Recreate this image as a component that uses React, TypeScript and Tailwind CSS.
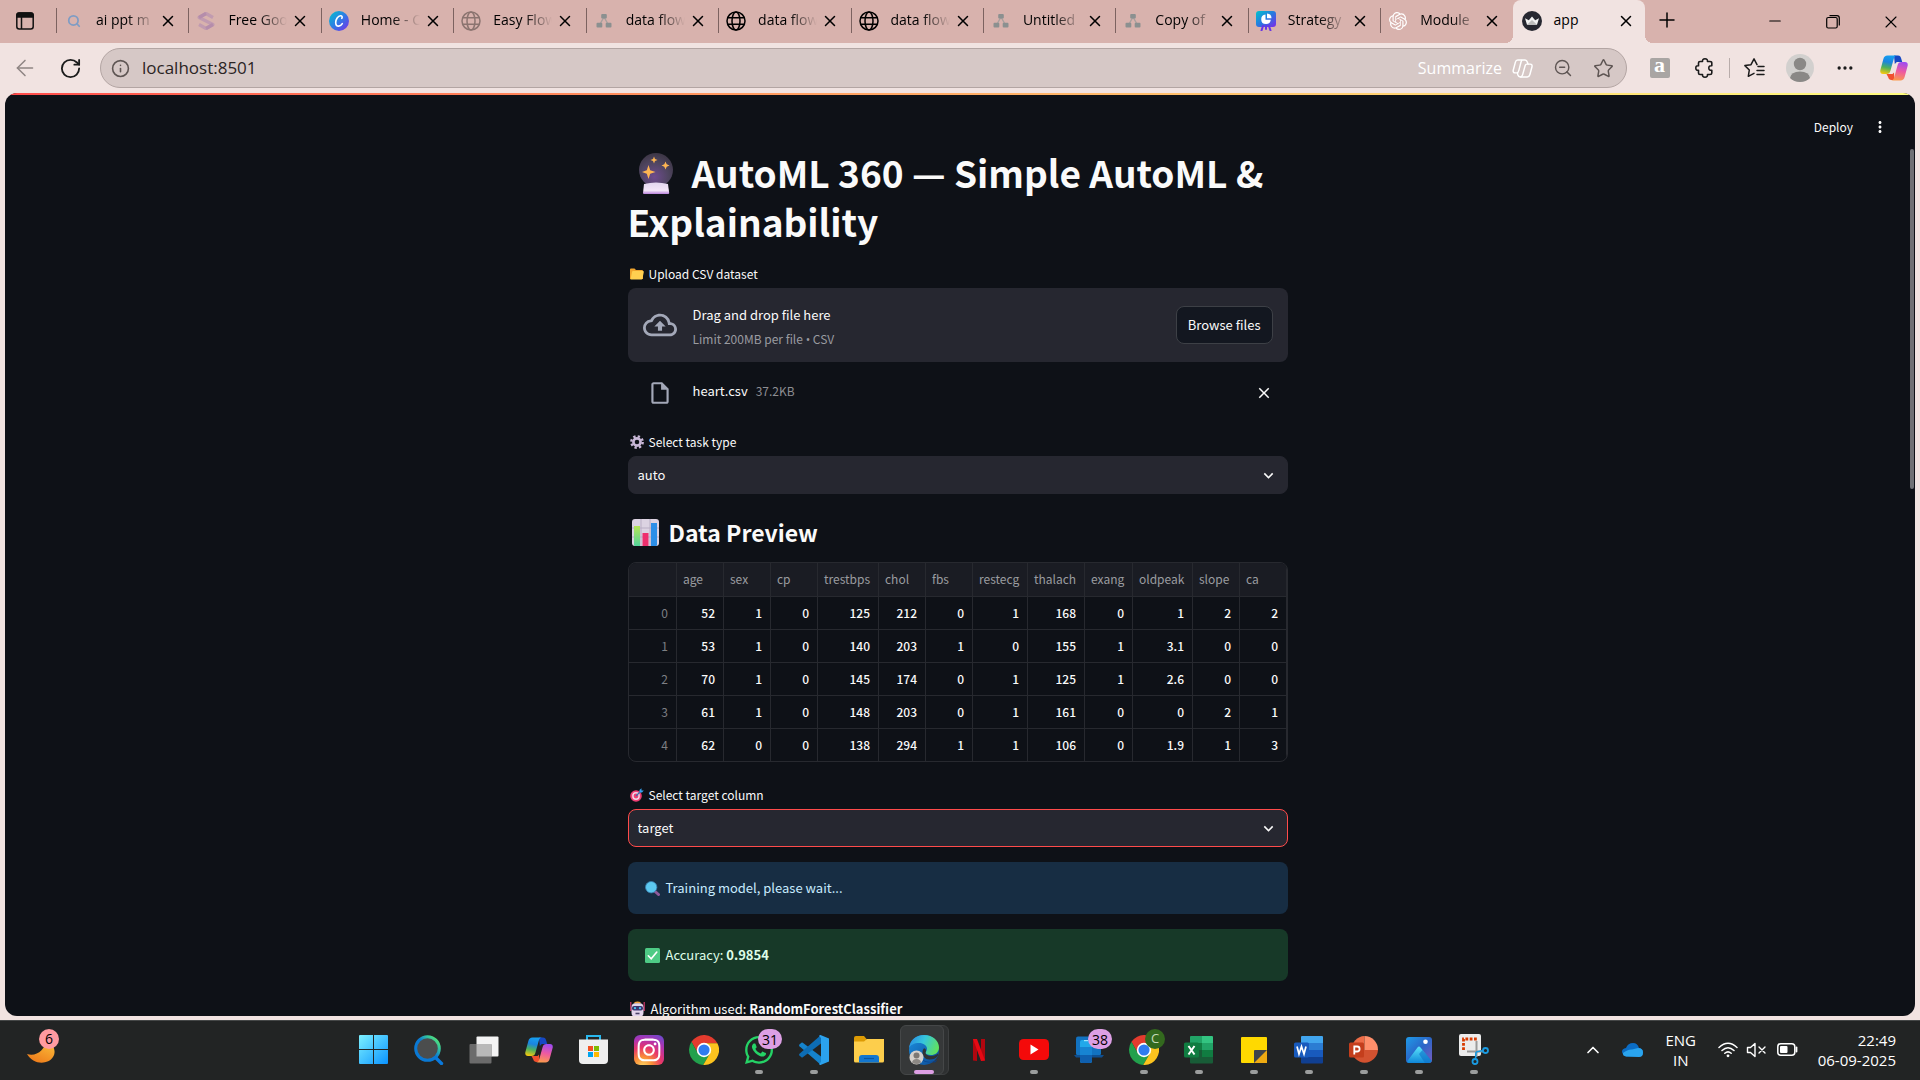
import React, { useId } from "react";
import {
  ArrowLeft,
  ChevronUp,
  Ellipsis,
  Info,
  Minus,
  Plus,
  RotateCw,
  Search,
  Star,
  X,
  ZoomOut,
} from "lucide-react";
import { SiOpenai } from "react-icons/si";
import { FaInstagram, FaWhatsapp } from "react-icons/fa";
import {
  MdClose,
  MdKeyboardArrowDown,
  MdMoreVert,
  MdOutlineCloudUpload,
  MdOutlineInsertDriveFile,
} from "react-icons/md";

type IconProps = { className?: string };

/* ---------- Tab icons ---------- */

const Globe = ({ className }: IconProps) => (
  <svg viewBox="0 0 20 20" className={className} fill="none" stroke="currentColor" strokeWidth="1.5">
    <circle cx="10" cy="10" r="9" />
    <ellipse cx="10" cy="10" rx="4" ry="9" />
    <path d="M1.8 6.8h16.4M1.8 13.2h16.4" />
  </svg>
);

const Diagram = () => (
  <svg viewBox="0 0 16 16" className="size-4">
    <path d="M8 4 3.5 12M8 4l4.500 8" stroke="#a8a09e" strokeWidth="1.400" />
    <rect x="5.200" y="1" width="5.600" height="4.500" rx="1" fill="#8b9090" />
    <rect x="0.500" y="9.800" width="5.800" height="4.800" rx="1" fill="#8b9090" />
    <rect x="9.700" y="9.800" width="5.800" height="4.800" rx="1" fill="#8b9090" />
  </svg>
);

const SLogo = () => (
  <svg viewBox="0 0 20 20" className="size-5" fill="none" stroke="#c19bb0" strokeWidth="3.200" strokeLinejoin="round">
    <path d="M17 6.500 10 2.500 3 6.500 17 13.500 10 17.500 3 13.500" />
    <path d="M10 2.500 3 6.500M17 13.500 10 17.500" stroke="#b58dab" />
  </svg>
);

const CanvaLogo = () => (
  <svg viewBox="0 0 20 20" className="size-5">
    <defs>
      <linearGradient id="canva" x1="0" y1="0" x2="1" y2="1">
        <stop offset="0" stopColor="#00c4cc" />
        <stop offset="0.5" stopColor="#2f7be6" />
        <stop offset="1" stopColor="#7d2ae8" />
      </linearGradient>
    </defs>
    <circle cx="10" cy="10" r="10" fill="url(#canva)" />
    <path d="M12.800 7.300c.8-1.300.3-2.700-1.300-2.600-2.500.2-4.800 3.500-4.800 6.700 0 2.300 1.200 3.700 3 3.700 1.500 0 2.800-1 3.600-2.400" fill="none" stroke="#fff" strokeWidth="1.600" strokeLinecap="round" />
  </svg>
);

const StrategyLogo = () => (
  <svg viewBox="0 0 20 20" className="size-5">
    <defs>
      <linearGradient id="strat" x1="0" y1="0" x2="1" y2="1">
        <stop offset="0" stopColor="#00c4cc" />
        <stop offset="0.5" stopColor="#2878e0" />
        <stop offset="1" stopColor="#7d2ae8" />
      </linearGradient>
    </defs>
    <rect width="20" height="16" rx="3" fill="url(#strat)" />
    <path d="M7 15 5.500 19.500M13 15l1.500 4.500M10 15v3" stroke="#6a35e6" strokeWidth="2" strokeLinecap="round" />
    <path d="M9.500 3.500a4.800 4.800 0 1 0 5.300 5.300H9.500z" fill="#fff" />
    <path d="M11 2.500v4.800h4.500A4.800 4.800 0 0 0 11 2.500z" fill="#fff" />
  </svg>
);

const CrownLogo = () => (
  <svg viewBox="0 0 20 20" className="size-5">
    <circle cx="10" cy="10" r="10" fill="#262730" />
    <path d="M3 7.200l3.800 2L10 5.600l3.200 3.600 3.800-2-2 6.600H5z" fill="#f2f2f2" />
    <path d="M5 13.800 10 9l5 4.800z" fill="#bdbdbd" />
  </svg>
);

/* ---------- Shared brand drawings ---------- */

const Copilot = ({ className }: IconProps) => {
  const id = useId();
  return (
    <svg viewBox="0 0 28 26" className={className}>
      <defs>
        <linearGradient id={id + "a"} x1="0.500" y1="0" x2="0.300" y2="1">
          <stop offset="0" stopColor="#16a0f0" />
          <stop offset="0.350" stopColor="#1b84e0" />
          <stop offset="0.650" stopColor="#4cb05e" />
          <stop offset="1" stopColor="#f4c80e" />
        </linearGradient>
        <linearGradient id={id + "b"} x1="0.600" y1="0" x2="0.400" y2="1">
          <stop offset="0" stopColor="#a04bf0" />
          <stop offset="0.500" stopColor="#ee5aa0" />
          <stop offset="1" stopColor="#fb9a4c" />
        </linearGradient>
      </defs>
      <path d="M14 0.500h4c2 0 2.600 1 3.200 3l1 3.500h-5.400l-2 2z" fill="#1648c4" />
      <path d="M6.500 19h6l1.500-1.500.5 7.500h-3c-2 0-2.700-.8-3.300-2.700z" fill="#f0502e" />
      <path d="M7.500.500H17c-2 0-2.700 1.300-3.300 3.500l-3.200 11.500c-.7 2.600-1.800 3.500-4 3.500H3C.7 19-.2 17.300.4 15L3.300 4.200C4 1.700 5.200.500 7.500.500z" fill={"url(#" + id + "a)"} />
      <path d="M20.500 25.500H11c2 0 2.700-1.300 3.300-3.500l3.200-11.500C18.200 7.900 19.300 7 21.500 7H25c2.300 0 3.200 1.700 2.600 4l-2.900 10.800c-.7 2.500-1.900 3.700-4.200 3.700z" fill={"url(#" + id + "b)"} />
    </svg>
  );
};

const Chrome = () => (
  <svg viewBox="2 2 44 44" className="size-[30px]">
    <path d="M5.550 12.020A22 22 0 0 1 43.600 14H24v10l-8.660 5z" fill="#e33b2e" />
    <path d="M5.550 12.020 15.340 29 24 24l8.660 5-9.810 16.970A22 22 0 0 1 5.550 12.020z" fill="#22a04c" />
    <path d="M43.600 14A22 22 0 0 1 22.850 45.970L32.660 29 24 24V14z" fill="#fcc31e" />
    <circle cx="24" cy="24" r="10.500" fill="#fff" />
    <circle cx="24" cy="24" r="8.200" fill="#2f7bf0" />
  </svg>
);

/* ---------- Taskbar icons ---------- */

const Windows = () => (
  <svg viewBox="0 0 29 29" className="size-[29px]">
    <defs>
      <linearGradient id="win" x1="0" y1="0" x2="29" y2="29" gradientUnits="userSpaceOnUse">
        <stop offset="0" stopColor="#7df1ff" />
        <stop offset="1" stopColor="#0a93ff" />
      </linearGradient>
    </defs>
    <path d="M0 1q0-1 1-1h13v14H0zM15 0h13q1 0 1 1v13H15zM0 15h14v14H1q-1 0-1-1zM15 15h14v13q0 1-1 1H15z" fill="url(#win)" />
  </svg>
);

const SearchOrb = () => (
  <svg viewBox="0 0 30 30" className="size-[30px]" fill="none">
    <defs>
      <linearGradient id="orb" x1="1" y1="0" x2="0.200" y2="0.800">
        <stop offset="0" stopColor="#66ee66" />
        <stop offset="0.300" stopColor="#35c79b" />
        <stop offset="0.600" stopColor="#0a79d4" />
      </linearGradient>
    </defs>
    <path d="m21 22 6.500 6.500" stroke="#0a79dc" strokeWidth="3.400" strokeLinecap="round" />
    <circle cx="13.500" cy="13.500" r="11.800" fill="#4b4d4d" stroke="url(#orb)" strokeWidth="3" />
  </svg>
);

const TaskView = () => (
  <svg viewBox="0 0 30 28" className="h-7 w-[30px]">
    <rect x="7.500" y="0.500" width="22" height="20" rx="1" fill="#f4f4f4" />
    <rect x="0.500" y="8" width="22" height="19.500" rx="1" fill="#6b6b6b" />
    <path d="M7.500 8h15v12.500h-15z" fill="#b9b9b9" />
  </svg>
);

const Store = () => (
  <svg viewBox="0 0 29 29" className="size-[29px]">
    <path d="M8 6V1h13v5" fill="none" stroke="#29b8ee" strokeWidth="2" />
    <path d="M0 4.500h29V25q0 4-4 4H4q-4 0-4-4z" fill="#efefef" />
    <path d="M9 11h5v5H9z" fill="#f25022" />
    <path d="M15 11h5v5h-5z" fill="#7fba00" />
    <path d="M9 17h5v5H9z" fill="#00a4ef" />
    <path d="M15 17h5v5h-5z" fill="#ffb900" />
  </svg>
);

const Instagram = () => (
  <span className="flex size-[30px] items-center justify-center rounded-md bg-[radial-gradient(circle_at_30%_105%,#fdd866_0%,#fa8f38_25%,#e8366a_50%,#b132b0_72%,#5a50d4_100%)]">
    <FaInstagram className="size-[26px] text-white" />
  </span>
);

const VsCode = () => (
  <svg viewBox="0 0 30 30" className="size-[30px]">
    <path d="M0.400 9.500 2.400 7.800q.7-.5 1.400 0L22 21.500V30L0.500 11.200q-.8-.9-.1-1.700z" fill="#1583cc" />
    <path d="M0.400 20.500 2.400 22.200q.7.500 1.400 0L22 8.500V0L0.500 18.800q-.8.900-.1 1.700z" fill="#0d6db5" />
    <path d="M21.500 0 30 3.500v23L21.500 30q-1 0-1.500-1l2-2V3l-2-2q.5-1 1.500-1z" fill="#2ba2ee" />
  </svg>
);

const Explorer = () => (
  <svg viewBox="0 0 30 27" className="h-[27px] w-[30px]">
    <path d="M0 2q0-2 2-2h8l3 3.500V9H0z" fill="#dd9b04" />
    <path d="M0 5.500h10l3-2.500h17v22q0 1.500-1.500 1.500h-27Q0 26.500 0 25z" fill="#fdce4c" />
    <path d="M5 26.500V22q0-3 3-3h14q3 0 3 3v4.500z" fill="#1377d0" />
    <path d="M10 22.500h10" stroke="#0b56a0" strokeWidth="1.200" />
  </svg>
);

const Edge = () => (
  <svg viewBox="0 0 30 30" className="size-[30px]">
    <defs>
      <linearGradient id="edge-top" x1="0" y1="0.300" x2="1" y2="0.600">
        <stop offset="0" stopColor="#2a8fe4" />
        <stop offset="0.450" stopColor="#36c6dc" />
        <stop offset="1" stopColor="#62e35a" />
      </linearGradient>
      <linearGradient id="edge-low" x1="0" y1="0" x2="1" y2="1">
        <stop offset="0" stopColor="#1c8fe0" />
        <stop offset="1" stopColor="#0c4a95" />
      </linearGradient>
    </defs>
    <circle cx="15" cy="15" r="15" fill="url(#edge-low)" />
    <path d="M0 13C1 5 7 0 15 0c9 0 15 6 15 12.500 0 5-4 7.500-8 7.500-3.500 0-5.500-1-5.500-2.200 0-.9 1.500-1.700 1.500-4C18 10.500 14.500 8 10 8 5 8 1.500 10 0 13z" fill="url(#edge-top)" />
    <path d="M11 18c0 6 5 9 10 9 3 0 5-1 6.500-2 1 0-.5 1.500-1.500 2.500-3-1-8 1-12-2s-4-6-3-7.500z" fill="#0b3e86" />
    <path d="M29 20.500c-2 3-5 4-8.500 4-4.500 0-7-3.500-7-7 0-2 .8-3.500 1.500-4.200 2 .2 2.500 2.500 1.500 4.500 0 2 3 3.200 5.700 3.200 3 0 5.500-1 6.800-2.500z" fill="#303334" />
    <circle cx="7.500" cy="22.500" r="7" fill="#d4d0cc" />
    <circle cx="7.500" cy="20.500" r="3" fill="#7c7874" />
    <path d="M3 27.500q.5-3.500 4.500-3.500t4.500 3.500q-4 3-9 0z" fill="#8c8884" />
  </svg>
);

const Netflix = () => (
  <svg viewBox="0 0 12 22" className="h-[22px] w-3">
    <path d="M0 0h4v22l-4-.5zM8 0h4v21.500L8 22z" fill="#b1060f" />
    <path d="M0 0h4l8 21.500L8 22z" fill="#e50914" />
  </svg>
);

const YouTube = () => (
  <svg viewBox="0 0 30 21" className="h-[21px] w-[30px]">
    <rect width="30" height="21" rx="4.500" fill="#f40a0a" />
    <path d="m11.500 5.500 8 5-8 5z" fill="#fff" />
  </svg>
);

const PhoneLink = () => (
  <svg viewBox="0 0 30 27" className="h-[27px] w-[30px]">
    <rect x="2" y="0.500" width="25" height="19" rx="2" fill="#1272c0" />
    <path d="M0 19h30l-2 2.500H2z" fill="#0f4f90" />
    <rect x="6" y="4" width="12" height="23" rx="2" fill="#21a8ea" />
    <path d="M6 19h12v6q0 2-2 2H8q-2 0-2-2z" fill="#0f5fae" />
    <path d="M6 11h12v8H6z" fill="#1784d2" />
    <path d="M10 4.600h4" stroke="#9be7ff" strokeWidth="1.200" />
  </svg>
);

const Excel = () => (
  <svg viewBox="0 0 29 28" className="h-7 w-[29px]">
    <path d="M6 1q0-1 1-1h11v7H6z" fill="#21a366" />
    <path d="M18 0h10q1 0 1 1v6H18z" fill="#33c481" />
    <path d="M6 7h12v7H6z" fill="#107c41" />
    <path d="M18 7h11v7H18z" fill="#21a366" />
    <path d="M6 14h23v12.500q0 1-1 1H7q-1 0-1-1z" fill="#185c37" />
    <path d="M18 14h11v7H18z" fill="#107c41" />
    <rect y="6.500" width="15" height="15" rx="1.500" fill="#107c41" />
    <path d="m4.500 10 6 8.500M10.500 10l-6 8.500" stroke="#fff" strokeWidth="2" />
  </svg>
);

const Sticky = () => (
  <svg viewBox="0 0 26 26" className="size-[26px]">
    <rect width="26" height="26" rx="1" fill="#ffd900" />
    <path d="M13 26V14q0-1 1-1h12v13z" fill="#efab12" />
    <path d="M13 26V14q0-1 1-1h12z" fill="#40454a" />
  </svg>
);

const Word = () => (
  <svg viewBox="0 0 29 28" className="h-7 w-[29px]">
    <path d="M7 1q0-1 1-1h20q1 0 1 1v6H7z" fill="#41a5ee" />
    <path d="M7 7h22v7H7z" fill="#2b7cd3" />
    <path d="M7 14h22v7H7z" fill="#185abd" />
    <path d="M7 21h22v5.500q0 1-1 1H8q-1 0-1-1z" fill="#103f91" />
    <rect y="6.500" width="15" height="15" rx="1.500" fill="#185abd" />
    <path d="m3 10.500 2 7.500 2.500-7.500L10 18l2-7.500" fill="none" stroke="#fff" strokeWidth="1.700" />
  </svg>
);

const PowerPoint = () => (
  <svg viewBox="0 0 29 28" className="h-7 w-[29px]">
    <path d="M15.500 0v14h-13A13.500 14 0 0 1 15.500 0z" fill="#ed6c47" />
    <path d="M15.500 0A13.500 14 0 0 1 29 14H15.500z" fill="#ff8f6b" />
    <path d="M2.500 14H29a13.300 14 0 0 1-26.500 0z" fill="#d35230" />
    <rect y="6.500" width="15" height="15" rx="1.500" fill="#c43e1c" />
    <path d="M5.300 18.500v-8h2.800q2.500 0 2.500 2.500T8.100 15.500H5.300" fill="none" stroke="#fff" strokeWidth="1.800" />
  </svg>
);

const Photos = () => (
  <svg viewBox="0 0 26 26" className="size-[26px]">
    <defs>
      <linearGradient id="ph-bg" x1="0" y1="0" x2="1" y2="1">
        <stop offset="0" stopColor="#1f9be8" />
        <stop offset="0.500" stopColor="#2a66c8" />
        <stop offset="1" stopColor="#7b5bc0" />
      </linearGradient>
      <linearGradient id="ph-hill" x1="0" y1="0" x2="0" y2="1">
        <stop offset="0" stopColor="#5be4fa" />
        <stop offset="1" stopColor="#0f86d8" />
      </linearGradient>
    </defs>
    <rect width="26" height="26" rx="3" fill="url(#ph-bg)" />
    <path d="M1 24.500 11.500 10.500q1.500-2 3 0L25.500 24q-1 2-3 2H3q-1.500 0-2-1.500z" fill="url(#ph-hill)" />
    <path d="m13 17 3.500-4L26 24q-1 2-3.500 2H19z" fill="#0e72c8" opacity="0.600" />
    <circle cx="19.500" cy="4.800" r="2.300" fill="#fff" />
  </svg>
);

const Snipping = () => (
  <svg viewBox="0 0 30 31" className="h-[31px] w-[30px]">
    <rect width="22" height="22" rx="2" fill="#ececec" />
    <path d="M4.500 16V5H18" fill="none" stroke="#d83b01" strokeWidth="2.800" strokeDasharray="2.800 1.500" />
    <path d="M17.500 7v16M8 17.500h17" stroke="#9a9a9a" strokeWidth="2" />
    <circle cx="26.500" cy="16.500" r="2.500" fill="none" stroke="#199be2" strokeWidth="1.800" />
    <circle cx="16" cy="27.500" r="2.500" fill="none" stroke="#199be2" strokeWidth="1.800" />
    <path d="m17 18 7-1.500M17 18l-.5 7" stroke="#199be2" strokeWidth="1.600" />
  </svg>
);

/* ---------- Emoji drawings ---------- */

const CrystalBall = () => (
  <svg viewBox="0 0 36 42" className="mr-[18px] ml-2.5 inline-block h-[42px] w-9 align-[-7px]">
    <defs>
      <radialGradient id="ball" cx="0.450" cy="0.700" r="0.700">
        <stop offset="0" stopColor="#6e4b8e" />
        <stop offset="0.600" stopColor="#4f4560" />
        <stop offset="1" stopColor="#3c3645" />
      </radialGradient>
      <linearGradient id="base" x1="0" y1="0" x2="0" y2="1">
        <stop offset="0" stopColor="#e2d6ee" />
        <stop offset="0.700" stopColor="#f3e6f8" />
        <stop offset="1" stopColor="#b982dc" />
      </linearGradient>
    </defs>
    <circle cx="18" cy="17" r="17" fill="url(#ball)" />
    <path d="M6 31q12-3 24 0l1.200 9q0 1-1 1H6q-1 0-1-1z" fill="url(#base)" />
    <path d="m10.500 12 1.700 5.300L17.500 19l-5.300 1.700L10.500 26l-1.700-5.300L4 19l4.800-1.700zM16 3.500l1 2.500 2.500 1L17 8l-1 2.500L15 8l-2.500-1L15 6zM27.500 8.500l1.200 2.800 2.800 1.200-2.800 1.200-1.200 2.800-1.200-2.800-2.800-1.200 2.800-1.200z" fill="#fdb552" />
  </svg>
);

const Folder = () => (
  <svg viewBox="0 0 14 12" className="h-3 w-3.5">
    <path d="M0 1.500Q0 .5 1 .5h3.500L6 2h6q1 0 1 1v8H0z" fill="#f0a52e" />
    <path d="M2 4q.2-1 1-1h10q1 0 .8 1l-1.300 6.500q-.2 1-1 1H.500z" fill="#ffcf50" />
  </svg>
);

const Gear = () => (
  <svg viewBox="0 0 14 14" className="size-3.5">
    <circle cx="7" cy="7" r="5.700" fill="none" stroke="#c9b8d8" strokeWidth="2.400" strokeDasharray="2.300 2.180" />
    <circle cx="7" cy="7" r="3.600" fill="none" stroke="#c9b8d8" strokeWidth="2.600" />
  </svg>
);

const Target = () => (
  <svg viewBox="0 0 14 14" className="size-3.5">
    <circle cx="6" cy="8" r="5.800" fill="#ee3f74" />
    <circle cx="6" cy="8" r="3.900" fill="#f3d5e6" />
    <circle cx="6" cy="8" r="2.400" fill="#ee3f74" />
    <path d="M6 8 11 3" stroke="#3b6fb0" strokeWidth="1.200" />
    <path d="M9.500 4.500V2L11.500.2V2.500H13.800L12 4.500z" fill="#35a0ee" />
  </svg>
);

const Chart = () => (
  <svg viewBox="0 0 27 27" className="size-[27px]">
    <defs>
      <linearGradient id="bar-g" x1="0" y1="0" x2="0" y2="1">
        <stop offset="0" stopColor="#b6e657" />
        <stop offset="1" stopColor="#52d39a" />
      </linearGradient>
    </defs>
    <rect width="27" height="27" rx="3" fill="#dcd3e2" />
    <path d="M0 9h27M0 18h27M9 0v27M18 0v27" stroke="#b9aec4" strokeWidth="1" />
    <path d="M2 7h6v20H3q-1 0-1-1z" fill="url(#bar-g)" />
    <path d="M10.500 14h6v13h-6z" fill="#ee2f6e" />
    <path d="M19 4h6v22q0 1-1 1h-5z" fill="#2c8fe8" />
  </svg>
);

const Magnifier = () => (
  <svg viewBox="0 0 15 15" className="size-[15px]">
    <path d="m9 9.500 4.500 4" stroke="#8f5a9a" strokeWidth="3" strokeLinecap="round" />
    <circle cx="6.200" cy="6.200" r="5.700" fill="#5cc8f0" stroke="#3a7fae" strokeWidth="0.800" />
  </svg>
);

const CheckBox = () => (
  <svg viewBox="0 0 15 15" className="size-[15px]">
    <rect width="15" height="15" rx="1.500" fill="#4ecb85" />
    <path d="m3.300 7.800 2.900 3L11.800 4" fill="none" stroke="#fff" strokeWidth="1.600" strokeLinecap="round" />
  </svg>
);

const Robot = () => (
  <svg viewBox="0 0 15 16" className="h-4 w-[15px]">
    <path d="M.8 1v9M14.200 1v9" stroke="#d8386e" strokeWidth="1.200" />
    <path d="M4 2.500Q4 .5 7.500.5T11 2.500z" fill="#f3a43c" />
    <rect x="1.500" y="2.300" width="12" height="13.500" rx="4" fill="#e3d4ec" />
    <rect x="2" y="5" width="11" height="4.500" rx="2" fill="#3c3570" />
    <circle cx="5" cy="7.200" r="1.100" fill="#4cc8f4" />
    <circle cx="10" cy="7.200" r="1.100" fill="#4cc8f4" />
    <path d="M5.500 12.500h4" stroke="#4a4068" strokeWidth="1.600" />
  </svg>
);

/* ---------- Browser chrome ---------- */

const tabs: { title: string; icon: React.ReactNode; active?: boolean }[] = [
  { title: "ai ppt m", icon: <Search className="size-3.5 text-[#7f9cc4]" strokeWidth={3} /> },
  { title: "Free Goo", icon: <SLogo /> },
  { title: "Home - C", icon: <CanvaLogo /> },
  { title: "Easy Flow", icon: <Globe className="size-5 text-[#8b7470]" /> },
  { title: "data flow", icon: <Diagram /> },
  { title: "data flow", icon: <Globe className="size-5 text-black" /> },
  { title: "data flow", icon: <Globe className="size-5 text-black" /> },
  { title: "Untitled", icon: <Diagram /> },
  { title: "Copy of", icon: <Diagram /> },
  { title: "Strategy", icon: <StrategyLogo /> },
  { title: "Module", icon: <SiOpenai className="size-[18px] text-white" /> },
  { title: "app", icon: <CrownLogo />, active: true },
];

const TabStrip = () => (
  <div className="flex h-[43px] items-stretch bg-[#d8b2ad]">
    <button aria-label="Tab actions" className="flex w-14 shrink-0 items-center pb-0.5 pl-4">
      <svg viewBox="0 0 18 18" className="size-[18px]" fill="none" stroke="#111" strokeWidth="1.500">
        <rect x="0.800" y="1" width="16.400" height="16" rx="2.500" />
        <path d="M1 3.500Q1 1 3 1h12q2 0 2 2.500V5H1z" fill="#111" />
        <path d="M5.500 5v12" />
      </svg>
    </button>
    <div className="grid max-w-[1589px] flex-1 grid-cols-12">
      {tabs.map((tab, i) => (
        <div
          key={i}
          className={
            tab.active
              ? "relative flex min-w-0 items-center rounded-t-lg bg-[#f1e3e1] pb-0.5 pl-[9px] before:absolute before:bottom-0 before:-left-2 before:size-2 before:bg-[radial-gradient(circle_at_0_0,transparent_8px,#f1e3e1_8px)] after:absolute after:-right-2 after:bottom-0 after:size-2 after:bg-[radial-gradient(circle_at_100%_0,transparent_8px,#f1e3e1_8px)]"
              : "flex min-w-0 items-center pb-0.5 before:h-[25px] before:w-px before:bg-[#7c6260]"
          }
        >
          <span className={tab.active ? "flex w-5 shrink-0 justify-center" : "ml-[7px] flex w-5 shrink-0 justify-center"}>{tab.icon}</span>
          <span
            className={
              tab.active
                ? "ml-3 w-[62px] pb-0.5 text-[14px] leading-5 whitespace-nowrap text-black"
                : "ml-3 w-[62px] bg-[linear-gradient(90deg,#000_50%,transparent_95%)] bg-clip-text pb-0.5 text-[14px] leading-5 whitespace-nowrap text-transparent"
            }
          >
            {tab.title}
          </span>
          <button aria-label={"Close " + tab.title} className="flex size-5 items-center justify-center">
            <X className="size-[18px]" strokeWidth={2} />
          </button>
        </div>
      ))}
    </div>
    <button aria-label="New tab" className="flex w-11 items-center justify-center pb-1">
      <Plus className="size-6" strokeWidth={1.500} />
    </button>
    <div className="ml-auto flex">
      <button aria-label="Minimize" className="flex w-[58px] items-center justify-center pb-0.5">
        <Minus className="size-[18px]" strokeWidth={1.500} />
      </button>
      <button aria-label="Restore" className="flex w-[58px] items-center justify-center">
        <svg viewBox="0 0 14 14" className="size-3.5" fill="none" stroke="#000" strokeWidth="1.200">
          <rect x="0.700" y="2.500" width="10.500" height="10.500" rx="1.500" />
          <path d="M3.500.700h7.500q2.300 0 2.300 2.300v7.500" />
        </svg>
      </button>
      <button aria-label="Close window" className="flex w-[58px] items-center justify-center">
        <X className="size-5" strokeWidth={1.300} />
      </button>
    </div>
  </div>
);

const Toolbar = () => (
  <div className="flex h-[50px] items-center bg-[#f1e3e1]">
    <button aria-label="Back" className="flex w-[50px] justify-center text-[#8f8583]">
      <ArrowLeft className="size-[26px]" strokeWidth={1.400} />
    </button>
    <button aria-label="Reload" className="flex w-10 justify-center text-[#1b1b1b]">
      <RotateCw className="size-[23px]" strokeWidth={1.900} />
    </button>
    <div className="ml-2.5 flex h-10 flex-1 items-center rounded-full border border-[#b3a5a3] bg-[#d6c8c6] text-[#5e5553]">
      <Info className="ml-2.5 size-[19px] shrink-0" strokeWidth={2} />
      <input
        aria-label="Address"
        defaultValue="localhost:8501"
        className="ml-3 min-w-0 flex-1 bg-transparent text-[17px] text-[#2b2424] outline-none"
      />
      <button className="flex items-center gap-2.5 text-[16px] text-white">
        Summarize
        <svg viewBox="0 0 28 26" className="h-[19px] w-[21px]" fill="none" stroke="#fff" strokeWidth="2">
          <path d="M7.500 1.500h10c2 0 2.600 1 3.200 3l.8 2.500H20c-1.500 0-2 .8-2.500 2.500L14.300 21c-.7 2.500-1.300 3.500-3.300 3.500-2 0-2.700-.8-3.300-2.700L7 19H4c-2.300 0-3.200-1.700-2.600-4L4.300 4.200C4.800 2.300 5.700 1.500 7.500 1.500z" />
          <path d="M13.500 1.500c-1 1-1.300 2-1.600 3L9 15.500C8.300 18 8 19 6.500 19M21 7h3.500c2.300 0 3 1.700 2.400 4L24 21.500c-.6 2-1.500 3-3.500 3H11" />
        </svg>
      </button>
      <button aria-label="Zoom" className="ml-2.5 flex w-10 justify-center">
        <ZoomOut className="size-5" strokeWidth={1.700} />
      </button>
      <button aria-label="Favorite" className="mr-[3px] flex w-10 justify-center">
        <Star className="size-[21px]" strokeWidth={1.700} />
      </button>
    </div>
    <div className="ml-2.5 flex items-center text-[#1b1b1b]">
      <button aria-label="Amazon Assistant" className="flex w-[45px] justify-center">
        <span className="flex size-5 items-center justify-center rounded-xs bg-[#a9a5a3] font-['Liberation_Serif',serif] text-[22px] leading-none font-bold text-white">
          <span className="pb-1.5">a</span>
        </span>
      </button>
      <button aria-label="Extensions" className="flex w-[45px] justify-center">
        <svg viewBox="0 0 20 20" className="size-5" fill="none" stroke="currentColor" strokeWidth="1.600" strokeLinejoin="round">
          <path d="M3.500 5Q3.500 3.500 5 3.500h2.500q-.3-2.700 2.500-2.700t2.500 2.700H15q1.800 0 1.800 1.500v2.800q-3-.4-3 2.200t3 2.200V15q0 1.500-1.800 1.500h-2.500q.3 2.700-2.500 2.700t-2.500-2.700H5q-1.500 0-1.500-1.500v-2.800Q.8 12.500.8 10t2.700-2.200z" />
        </svg>
      </button>
      <span className="mx-0.5 h-5 w-px bg-[#b8acaa]" />
      <button aria-label="Favorites" className="flex w-[45px] justify-center">
        <svg viewBox="0 0 21 20" className="h-5 w-[21px]" fill="none" stroke="currentColor" strokeWidth="1.500" strokeLinecap="round" strokeLinejoin="round">
          <path d="M13 6.700 10 .9 7 6.700.9 7.600l4.400 4.400-1 6.300L10 15.300M14 8.500h6M13 12.500h7M13 16.500h7" />
        </svg>
      </button>
      <button aria-label="Profile" className="flex w-[45px] justify-center">
        <svg viewBox="0 0 28 28" className="size-7">
          <circle cx="14" cy="14" r="14" fill="#d2d0ce" />
          <circle cx="14" cy="10" r="6.200" fill="#8a8886" />
          <path d="M4 24q1-6.500 10-6.500T24 24q-4 4-10 4T4 24z" fill="#8a8886" />
        </svg>
      </button>
      <button aria-label="Settings and more" className="flex w-[45px] justify-center">
        <Ellipsis className="size-5" strokeWidth={2} />
      </button>
      <button aria-label="Copilot" className="mr-1 ml-1 flex w-[45px] justify-center">
        <Copilot className="h-[26px] w-7" />
      </button>
    </div>
  </div>
);

/* ---------- Streamlit page ---------- */

const columns = ["age", "sex", "cp", "trestbps", "chol", "fbs", "restecg", "thalach", "exang", "oldpeak", "slope", "ca"];
const columnWidths = ["w-12", "w-[47px]", "w-[47px]", "w-[47px]", "w-[61px]", "w-[47px]", "w-[47px]", "w-[55px]", "w-[57px]", "w-12", "w-[60px]", "w-[47px]", "w-[47px]", ""];
const rows = [
  ["52", "1", "0", "125", "212", "0", "1", "168", "0", "1", "2", "2"],
  ["53", "1", "0", "140", "203", "1", "0", "155", "1", "3.1", "0", "0"],
  ["70", "1", "0", "145", "174", "0", "1", "125", "1", "2.6", "0", "0"],
  ["61", "1", "0", "148", "203", "0", "1", "161", "0", "0", "2", "1"],
  ["62", "0", "0", "138", "294", "1", "1", "106", "0", "1.9", "1", "3"],
];

const DataTable = () => (
  <div className="mt-3.5 overflow-hidden rounded-lg border border-[#27292f]">
    <table className="w-full table-fixed border-collapse text-[12px] leading-4">
      <colgroup>
        {columnWidths.map((w, i) => (
          <col key={i} className={w} />
        ))}
      </colgroup>
      <thead>
        <tr className="h-[33px] border-b border-[#27292f] bg-[#1a1c23] text-left text-[#9b9ca0]">
          <th className="border-r border-[#27292f]" />
          {columns.map((c) => (
            <th key={c} className="border-r border-[#27292f] pl-1.5 font-normal whitespace-nowrap">{c}</th>
          ))}
          <th />
        </tr>
      </thead>
      <tbody>
        {rows.map((row, r) => (
          <tr key={r} className="h-[33px] border-b border-[#27292f] text-right last:border-b-0">
            <td className="border-r border-[#27292f] pr-2 text-[#7d7f84]">{r}</td>
            {row.map((cell, c) => (
              <td key={c} className="border-r border-[#27292f] pr-2 font-medium">{cell}</td>
            ))}
            <td />
          </tr>
        ))}
      </tbody>
    </table>
  </div>
);

const FieldLabel = ({ icon, htmlFor, children }: { icon: React.ReactNode; htmlFor: string; children: React.ReactNode }) => (
  <label htmlFor={htmlFor} className="mb-1 flex h-5 items-center gap-[5px] pl-0.5 text-[12px] leading-5">
    {icon}
    {children}
  </label>
);

const SelectBox = ({ id, value, focused }: { id: string; value: string; focused?: boolean }) => (
  <div className="grid items-center">
    <select
      id={id}
      defaultValue={value}
      className={
        focused
          ? "col-start-1 row-start-1 h-[38px] w-full appearance-none rounded-lg border border-[#ff4b4b] bg-[#262730] pl-[9px] text-[13px] outline-none"
          : "col-start-1 row-start-1 h-[38px] w-full appearance-none rounded-lg border border-[#262730] bg-[#262730] pl-[9px] text-[13px] outline-none"
      }
    >
      <option>{value}</option>
    </select>
    <MdKeyboardArrowDown className="pointer-events-none col-start-1 row-start-1 mr-2.5 size-[19px] justify-self-end" />
  </div>
);

const AppPage = () => (
  <section className="mx-[5px] flex min-h-0 flex-1 flex-col overflow-hidden rounded-xl bg-[#0e1117] font-['Noto_Sans_CJK_SC',sans-serif] text-[#fafafa]">
    <div className="h-0.5 shrink-0 bg-gradient-to-r from-[#ff4b4b] to-[#fffd80]" />
    <div className="flex min-h-0 flex-1">
      <div className="flex min-w-0 flex-1 flex-col">
        <header className="flex h-[53px] shrink-0 items-center justify-end gap-[18px] pt-2.5 pr-[21px]">
          <button className="text-[12px]">Deploy</button>
          <button aria-label="Main menu">
            <MdMoreVert className="size-[18px]" />
          </button>
        </header>
        <main className="mx-auto w-full max-w-[660px]">
          <h1 className="text-[37px] leading-[49px] font-bold">
            <CrystalBall />
            AutoML 360 — Simple AutoML &amp; Explainability
          </h1>

          <div className="mt-[18px]">
            <FieldLabel icon={<Folder />} htmlFor="upload">Upload CSV dataset</FieldLabel>
            <div className="flex h-[74px] items-center rounded-lg bg-[#262730] px-[15px]">
              <MdOutlineCloudUpload className="size-[34px] text-[#a3a8b8]" />
              <div className="ml-4 flex-1 pt-1">
                <p className="text-[13px] leading-6">Drag and drop file here</p>
                <p className="text-[12px] leading-6 text-[#9a9ba0]">
                  Limit 200MB per file <span className="font-['Open_Sans',sans-serif]">•</span> CSV
                </p>
              </div>
              <button id="upload" className="h-[38px] rounded-lg border border-[#3d4046] bg-[#131720] px-[11px] text-[13px]">
                Browse files
              </button>
            </div>
            <div className="flex h-[58px] items-center pt-1 pr-[15px] pl-[19px]">
              <MdOutlineInsertDriveFile className="size-[26px] text-[#a3a8b8]" />
              <span className="ml-5 pb-1 text-[13px] leading-5">heart.csv</span>
              <span className="ml-2 flex-1 pb-1 text-[12px] leading-5 text-[#8d8e93]">37.2KB</span>
              <button aria-label="Remove heart.csv">
                <MdClose className="size-[18px]" />
              </button>
            </div>
          </div>

          <div className="mt-3">
            <FieldLabel icon={<Gear />} htmlFor="task">Select task type</FieldLabel>
            <SelectBox id="task" value="auto" />
          </div>

          <h2 className="mt-[22px] flex h-8 items-center gap-2.5 pl-1 text-[23px] leading-8 font-bold">
            <Chart />
            Data Preview
          </h2>
          <DataTable />

          <div className="mt-[23px]">
            <FieldLabel icon={<Target />} htmlFor="target">Select target column</FieldLabel>
            <SelectBox id="target" value="target" focused />
          </div>

          <div className="mt-[15px] flex h-[52px] items-center gap-1.5 rounded-lg bg-[#172d43] px-[17px] text-[13px] text-[#c7ebff]">
            <Magnifier />
            Training model, please wait...
          </div>
          <div className="mt-[15px] flex h-[52px] items-center gap-1.5 rounded-lg bg-[#173928] px-[17px] text-[13px] text-[#dffde9]">
            <CheckBox />
            <span>Accuracy: <strong>0.9854</strong></span>
          </div>
          <p className="mt-4 flex h-6 items-center gap-1.5 pl-0.5 text-[13px] leading-6">
            <Robot />
            <span>Algorithm used: <strong>RandomForestClassifier</strong></span>
          </p>
        </main>
      </div>
      <div className="w-[5px] pt-[54px]">
        <div className="h-[340px] w-1 rounded-full bg-[#6f7175]" />
      </div>
    </div>
  </section>
);

/* ---------- Taskbar ---------- */

type Task = { name: string; icon: React.ReactNode; running?: boolean; active?: boolean; badge?: string; account?: string };

const tasks: Task[] = [
  { name: "Start", icon: <Windows /> },
  { name: "Search", icon: <SearchOrb /> },
  { name: "Task view", icon: <TaskView /> },
  { name: "Copilot", icon: <Copilot className="h-[26px] w-7" /> },
  { name: "Microsoft Store", icon: <Store /> },
  { name: "Instagram", icon: <Instagram /> },
  { name: "Chrome", icon: <Chrome /> },
  { name: "WhatsApp", icon: <FaWhatsapp className="size-8 text-[#25d366]" />, running: true, badge: "31" },
  { name: "Visual Studio Code", icon: <VsCode />, running: true },
  { name: "File Explorer", icon: <Explorer /> },
  { name: "Edge", icon: <Edge />, active: true },
  { name: "Netflix", icon: <Netflix /> },
  { name: "YouTube", icon: <YouTube />, running: true },
  { name: "Phone Link", icon: <PhoneLink />, badge: "38" },
  { name: "Chrome profile", icon: <Chrome />, running: true, account: "C" },
  { name: "Excel", icon: <Excel />, running: true },
  { name: "Sticky Notes", icon: <Sticky />, running: true },
  { name: "Word", icon: <Word />, running: true },
  { name: "PowerPoint", icon: <PowerPoint />, running: true },
  { name: "Photos", icon: <Photos />, running: true },
  { name: "Snipping Tool", icon: <Snipping />, running: true },
];

const Taskbar = () => (
  <footer className="flex h-[60px] shrink-0 items-center border-t border-[#454747] bg-[#222424] text-white">
    <div className="w-[346px] shrink-0 pl-[27px]">
      <button aria-label="Weather, 6 alerts" className="relative block size-7">
        <svg viewBox="0 0 28 28" className="size-7">
          <defs>
            <linearGradient id="moon" x1="0.800" y1="0" x2="0.300" y2="1">
              <stop offset="0" stopColor="#fbc23c" />
              <stop offset="1" stopColor="#ee7c1b" />
            </linearGradient>
          </defs>
          <path d="M19 2c7 4 11 12 7 18-5 8-20 8-26-3 9 3 19-4 19-15z" fill="url(#moon)" />
        </svg>
        <span className="absolute -top-2 left-3 flex size-5 items-center justify-center rounded-full bg-[#ff9aa0] text-[14px] text-black">6</span>
      </button>
    </div>
    <nav className="flex h-full">
      {tasks.map((t) => (
        <button key={t.name} aria-label={t.name} className="relative flex w-[55px] shrink-0 items-center justify-center pb-0.5">
          {t.active && (
            <>
              <span className="absolute top-1 left-2 h-[50px] w-[45px] rounded-md border border-[#3d3f40] bg-[#2e3031]" />
              <span className="absolute top-1 left-1 h-[50px] w-11 rounded-md border border-[#454748] bg-[#363839]" />
            </>
          )}
          <span className="relative">{t.icon}</span>
          {t.badge && (
            <span className="absolute top-2 left-[27px] flex h-5 min-w-[23px] items-center justify-center rounded-full bg-[#dd9fe4] px-1 text-[14px] text-black">
              {t.badge}
            </span>
          )}
          {t.account && (
            <span className="absolute top-2 left-[29px] flex size-5 items-center justify-center rounded-full bg-[#33691e] text-[13px] text-[#c5d9b8]">
              {t.account}
            </span>
          )}
          {t.running && <span className="absolute bottom-1.5 h-1 w-2 rounded-full bg-[#9b9d9d]" />}
          {t.active && <span className="absolute bottom-1.5 h-1 w-5 rounded-full bg-[#dd9fe4]" />}
        </button>
      ))}
    </nav>
    <div className="ml-auto flex items-center pr-6 pb-0.5 text-[15px] leading-5">
      <button aria-label="Show hidden icons" className="flex w-10 justify-center">
        <ChevronUp className="size-5" strokeWidth={2} />
      </button>
      <button aria-label="OneDrive" className="flex w-10 justify-center">
        <svg viewBox="0 0 21 14" className="h-3.5 w-[21px]">
          <path d="M3 12Q0 11 0 8.500 0 5.500 4 5 6 0 11 0q4.500 0 6 5 4 .5 4 4.500 0 4-4 4H4z" fill="#0b6cc4" />
          <path d="M4 13.500Q.500 13 1 10q5-4 9-3.500l6-1.500q5 0 5 4.500t-4 4.500z" fill="#2aa4ee" />
        </svg>
      </button>
      <button className="ml-2.5 flex w-9 flex-col items-center">
        <span>ENG</span>
        <span>IN</span>
      </button>
      <button aria-label="Network, sound and battery" className="ml-[19px] flex items-center gap-2">
        <svg viewBox="0 0 20 16" className="h-4 w-5" fill="none" stroke="#fff" strokeWidth="1.500" strokeLinecap="round">
          <path d="M1 5.500q9-8.500 18 0M4 8.500q6-5.500 12 0M6.800 11.300q3.200-2.800 6.400 0" />
          <circle cx="10" cy="13.800" r="1.400" fill="#fff" stroke="none" />
        </svg>
        <svg viewBox="0 0 21 16" className="h-4 w-[21px]" fill="none" stroke="#fff" strokeWidth="1.400" strokeLinejoin="round" strokeLinecap="round">
          <path d="M1.500 5.500h3L9 1.500v13l-4.500-4h-3zM13 5l6 6M19 5l-6 6" />
        </svg>
        <svg viewBox="0 0 21 13" className="ml-0.5 h-[13px] w-[21px]">
          <rect x="0.800" y="0.800" width="17" height="11.400" rx="3" fill="none" stroke="#fff" strokeWidth="1.500" />
          <rect x="3" y="3" width="7.500" height="7" rx="1" fill="#fff" />
          <path d="M19.500 4.500v4" stroke="#fff" strokeWidth="1.800" strokeLinecap="round" />
        </svg>
      </button>
      <button className="ml-5 flex flex-col items-end text-right">
        <span>22:49</span>
        <span>06-09-2025</span>
      </button>
    </div>
  </footer>
);

export default function App() {
  return (
    <div className="flex h-screen flex-col overflow-hidden bg-[#f1e3e1] font-['Open_Sans',sans-serif] text-black">
      <TabStrip />
      <Toolbar />
      <AppPage />
      <div className="h-1 shrink-0" />
      <Taskbar />
    </div>
  );
}
